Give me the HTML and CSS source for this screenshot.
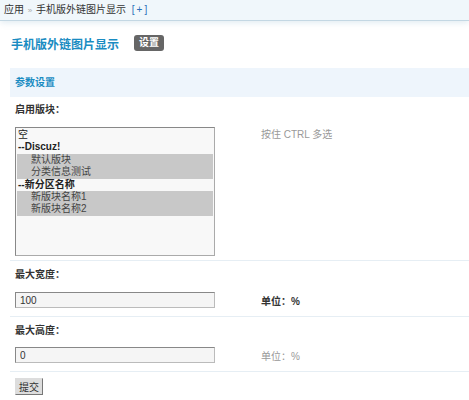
FILE: index.html
```html
<!DOCTYPE html>
<html lang="zh-CN">
<head>
    <meta charset="UTF-8">
    <title>手机版外链图片显示</title>
    <link rel="stylesheet" href="styles.css">
</head>
<body>
<div class="crumb">应用 <span class="sep">&raquo;</span> 手机版外链图片显示 <a class="add" href="#">[+]</a></div>

<div class="head">
    <h3>手机版外链图片显示</h3>
    <span class="tab">设置</span>
</div>

<form class="panel">
    <div class="band">参数设置</div>

    <div class="field field-list">
        <div class="label">启用版块：</div>
        <div class="row row-top">
            <div class="list">
                <div class="opt">空</div>
                <div class="opt group">--Discuz!</div>
                <div class="opt sub on">默认版块</div>
                <div class="opt sub on">分类信息测试</div>
                <div class="opt group">--新分区名称</div>
                <div class="opt sub on">新版块名称1</div>
                <div class="opt sub on">新版块名称2</div>
            </div>
            <div class="tip">按住 CTRL 多选</div>
        </div>
    </div>

    <div class="field">
        <div class="label">最大宽度：</div>
        <div class="row">
            <input class="txt" type="text" value="100">
            <div class="unit dark">单位：%</div>
        </div>
    </div>

    <div class="field field-last">
        <div class="label">最大高度：</div>
        <div class="row">
            <input class="txt" type="text" value="0">
            <div class="unit">单位：%</div>
        </div>
    </div>

    <div class="submit">
        <button class="btn" type="button">提交</button>
    </div>
</form>
</body>
</html>
```

FILE: styles.css
```css
body {
    margin: 0;

    font-family: "Liberation Sans", "Noto Sans CJK SC", sans-serif;
    font-size: 10px;
    color: #333;
    background: #fff;
}

.crumb {
    height: 20px;
    padding-left: 4px;

    line-height: 20px;

    border-bottom: 1px solid #c3d7e3;
    background: #f0f7fb;
    box-shadow: 0 2px 6px rgba(190, 212, 226, .45);
}

.crumb .sep {
    margin: 0 1px;

    color: #aaa;
    font-size: 8px;
}

.crumb .add {
    margin-left: 3px;

    color: #2a6fb8;
    letter-spacing: 2px;
    text-decoration: none;
}

.head {
    display: flex;
    align-items: center;

    height: 16px;
    padding: 14px 0 17px 11px;
}

.head h3 {
    margin: 0 15px 0 0;

    font-size: 12px;
    font-weight: bold;
    color: #1a8cc2;
}

.tab {
    height: 16px;
    padding: 0 5px;

    line-height: 16px;
    font-weight: bold;
    color: #fff;

    border-radius: 3px;
    background: #666;
}

.panel {
    margin-left: 10px;
}

.band {
    height: 29px;
    padding-left: 5px;

    line-height: 29px;
    font-weight: bold;
    color: #1a8cc2;

    background: #eef5fc;
}

.field {
    padding: 7px 0 8px 5px;

    border-bottom: 1px solid #e6eef4;
}

.field-list {
    padding-top: 6px;
    padding-bottom: 4px;
}

.label {
    height: 14px;
    margin-bottom: 10px;

    line-height: 14px;
    font-weight: bold;
    color: #333;
}

.field-last .label {
    margin-bottom: 9px;
}

.row {
    display: flex;
    align-items: center;
}

.row-top {
    align-items: flex-start;
}

.list {
    box-sizing: border-box;
    width: 200px;
    height: 129px;
    padding-top: 1px;

    border: 1px solid #aaa;
    border-top-color: #888;
    border-left-color: #888;
    background: #f8f8f8;
}

.opt {
    height: 12.4px;
    margin: 0 1px;
    padding-left: 1px;

    line-height: 12.4px;
    color: #222;
    white-space: pre;
}

.opt.group {
    font-weight: bold;
}

.opt.sub {
    padding-left: 14px;
    color: #444;
}

.opt.on {
    background: #c8c8c8;
}

.tip {
    margin: 2px 0 0 46px;

    line-height: 12px;
    color: #999;
}

.txt {
    box-sizing: border-box;
    width: 200px;
    height: 16px;
    margin: 0;
    padding: 0 4px;

    font-family: inherit;
    font-size: 10px;
    color: #333;

    border: 1px solid #bbb;
    border-top-color: #888;
    border-left-color: #888;
    background: #f5f5f5;
    outline: none;
}

.unit {
    margin-left: 46px;

    color: #999;
}

.unit.dark {
    font-weight: bold;
    color: #333;
}

.submit {
    padding: 6px 0 0 5px;
}

.btn {
    height: 17px;
    margin: 0;
    padding: 0 3px;

    font-family: inherit;
    font-size: 10px;
    color: #333;
    cursor: pointer;

    border: 1px solid;
    border-color: #ddd #777 #777 #ddd;
    background: #ddd;
}
```
